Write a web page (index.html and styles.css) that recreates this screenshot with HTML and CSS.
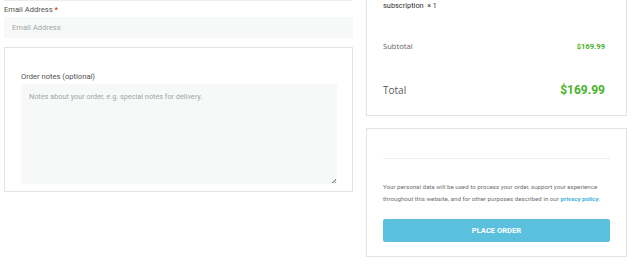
FILE: index.html
```html
<!DOCTYPE html>
<html lang="en">
<head>
<meta charset="utf-8">
<title>Checkout</title>
<link rel="stylesheet" href="styles.css">
</head>
<body>
<div class="page">
  <div class="col-left">
    <div class="card-sliver"></div>
    <div class="field">
      <label class="label">Email Address <span class="req">*</span></label>
      <div class="input">Email Address</div>
    </div>
    <div class="card notes-card">
      <label class="label">Order notes (optional)</label>
      <div class="textarea">Notes about your order, e.g. special notes for delivery.
        <span class="grip"></span>
      </div>
    </div>
  </div>
  <div class="col-right">
    <div class="card summary-card">
      <div class="item">subscription&nbsp; <span class="qty">× 1</span></div>
      <div class="row subtotal"><span class="row-label">Subtotal</span><span class="price">$169.99</span></div>
      <div class="row total"><span class="row-label">Total</span><span class="price">$169.99</span></div>
    </div>
    <div class="card payment-card">
      <div class="divider"></div>
      <p class="privacy">Your personal data will be used to process your order, support your experience throughout this website, and for other purposes described in our <a class="link" href="#">privacy policy</a>.</p>
      <button class="btn" type="button">PLACE ORDER</button>
    </div>
  </div>
</div>
</body>
</html>
```

FILE: styles.css
```css
html, body {
  margin: 0;
  padding: 0;
  background: #ffffff;
}
body {
  font-family: Roboto, "Liberation Sans", sans-serif;
  color: #4f4f4f;
}
.page {
  display: flex;
  gap: 13px;
  padding-left: 4px;
  align-items: flex-start;
}
.col-left {
  width: 349px;
  display: flex;
  flex-direction: column;
}
.col-right {
  width: 261px;
  display: flex;
  flex-direction: column;
  gap: 12px;
}
.card {
  border: 1px solid #e4e4e4;
  box-sizing: border-box;
  background: #fff;
}
.card-sliver {
  height: 1px;
  background: #ececec;
  margin-right: 1px;
}
.field {
  padding-top: 3px;
}
.label {
  display: block;
  font-size: 7.6px;
  line-height: 12px;
  color: #4f4f4f;
}
.req {
  color: #e2401c;
  font-weight: 700;
}
.input {
  margin-top: 1px;
  height: 21px;
  background: #f7f8f8;
  font-size: 7.6px;
  line-height: 21px;
  color: #a3a7a9;
  padding-left: 8px;
}
.notes-card {
  margin-top: 9px;
  height: 145px;
  padding: 23px 15px 0 16px;
}
.textarea {
  position: relative;
  margin-top: 1px;
  height: 100px;
  background: #f7f8f8;
  font-size: 7.3px;
  line-height: 12px;
  color: #a3a7a9;
  padding: 7px 8px;
  box-sizing: border-box;
}
.grip {
  position: absolute;
  right: 1px;
  bottom: 1px;
  width: 4px;
  height: 4px;
  background: linear-gradient(135deg, transparent 50%, #9a9a9a 50%, #9a9a9a 65%, transparent 65%, transparent 80%, #9a9a9a 80%);
}
.summary-card {
  border-top: none;
  height: 116px;
  padding: 0 21px 0 16px;
}
.item {
  font-size: 7.4px;
  line-height: 10px;
  color: #2e2e2e;
  padding-top: 1px;
}
.qty {
  font-size: 7px;
}
.row {
  display: flex;
  justify-content: space-between;
  align-items: center;
  font-family: "Open Sans", sans-serif;
}
.subtotal {
  margin-top: 29px;
  height: 12px;
}
.subtotal .row-label {
  font-size: 7.6px;
  color: #5f5f5f;
}
.subtotal .price {
  font-family: Roboto, sans-serif;
  font-weight: 700;
  font-size: 7.6px;
  color: #48b42a;
}
.total {
  margin-top: 30px;
  height: 16px;
}
.total .row-label {
  font-size: 10px;
  color: #5a5a5a;
}
.total .price {
  font-family: Roboto, sans-serif;
  font-weight: 700;
  font-size: 12px;
  color: #48b42a;
}
.payment-card {
  height: 129px;
  padding: 29px 16px 0 16px;
}
.divider {
  height: 1px;
  background: #eeeeee;
}
.privacy {
  margin: 23px 0 0 0;
  font-size: 6.2px;
  line-height: 11.5px;
  color: #707070;
}
.link {
  color: #3fb5de;
  font-weight: 700;
  text-decoration: none;
}
.btn {
  display: block;
  width: 100%;
  margin-top: 14px;
  height: 23px;
  border: none;
  border-radius: 2px;
  background: #5bc0de;
  color: #fff;
  font-family: Roboto, sans-serif;
  font-weight: 700;
  font-size: 7.6px;
  padding: 0;
}
```
